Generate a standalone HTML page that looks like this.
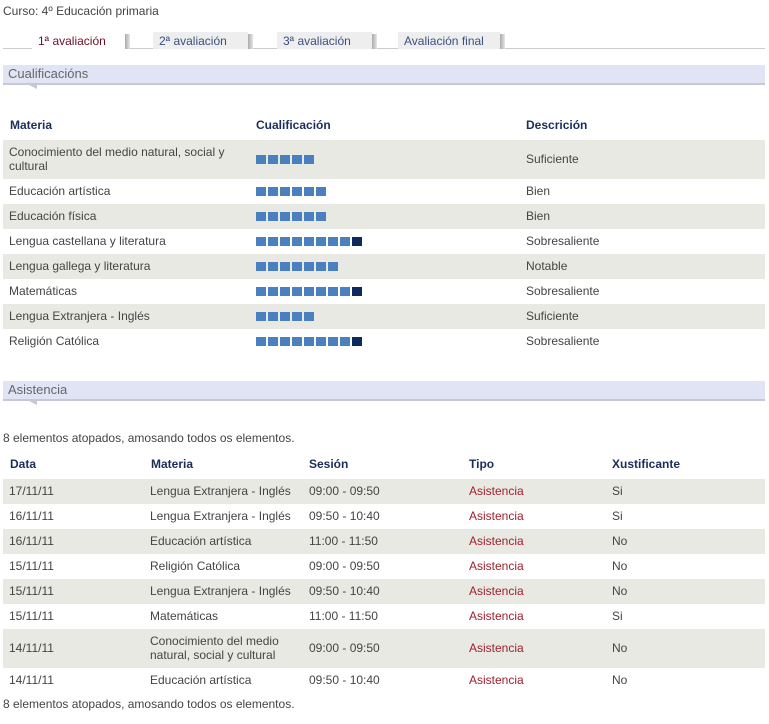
<!DOCTYPE html>
<html><head><meta charset="utf-8"><style>
body{margin:0;width:769px;height:724px;background:#fff;font-family:Tahoma,"Liberation Sans",sans-serif;font-size:12px;color:#444;position:relative;overflow:hidden}
.a{position:absolute;white-space:nowrap}
.tab{position:absolute;top:32px;height:17px;background:#eeeeee;color:#3a5080;padding-left:6px;line-height:18px;box-sizing:border-box}
.tab:after{content:"";position:absolute;right:-5px;top:2px;width:5px;height:15px;background:linear-gradient(90deg,#aaa,#e6e6e6)}
.bar{position:absolute;left:3px;width:762px;height:20px;background:#e1e4f4;border-bottom:2px solid #c6c8d2;box-sizing:border-box;color:#666;font-size:13px;line-height:18px;padding-left:5px}
.bar:after{content:"";position:absolute;left:22px;top:18px;border-left:12px solid transparent;border-top:6px solid #c6c8d2}
.row{position:absolute;left:3px;width:762px}
.s{background:#e9e9e3}
.h{position:absolute;font-weight:bold;color:#1a2e5a}
.sq{position:absolute;height:9px}
.sq i{display:inline-block;width:10px;height:9px;background:#4a80c0;margin-right:2px;vertical-align:top}
.sq i.d{background:#0c2a5c}
.r{color:#a02030}
</style></head><body>
<div class="a" style="left:3px;top:4px">Curso: 4º Educación primaria</div>
<div class="a" style="left:3px;top:48px;width:762px;height:1px;background:#ccc"></div>
<div class="tab" style="left:32px;width:93px;background:#fff;color:#6a1028">1ª avaliación</div>
<div class="tab" style="left:153px;width:95px">2ª avaliación</div>
<div class="tab" style="left:277px;width:95px">3ª avaliación</div>
<div class="tab" style="left:398px;width:102px">Avaliación final</div>
<div class="bar" style="top:65px">Cualificacións</div>

<div class="h" style="left:10px;top:118px">Materia</div>
<div class="h" style="left:256px;top:118px">Cualificación</div>
<div class="h" style="left:526px;top:118px">Descrición</div>

<div class="row s" style="top:140px;height:39px"></div>
<div class="row s" style="top:204px;height:25px"></div>
<div class="row s" style="top:254px;height:25px"></div>
<div class="row s" style="top:304px;height:25px"></div>

<div class="a" style="left:9px;top:145px;line-height:14px">Conocimiento del medio natural, social y<br>cultural</div>
<div class="sq" style="left:256px;top:155px"><i></i><i></i><i></i><i></i><i></i></div>
<div class="a" style="left:526px;top:152px">Suficiente</div>

<div class="a" style="left:9px;top:184px">Educación artística</div>
<div class="sq" style="left:256px;top:187px"><i></i><i></i><i></i><i></i><i></i><i></i></div>
<div class="a" style="left:526px;top:184px">Bien</div>

<div class="a" style="left:9px;top:209px">Educación física</div>
<div class="sq" style="left:256px;top:212px"><i></i><i></i><i></i><i></i><i></i><i></i></div>
<div class="a" style="left:526px;top:209px">Bien</div>

<div class="a" style="left:9px;top:234px">Lengua castellana y literatura</div>
<div class="sq" style="left:256px;top:237px"><i></i><i></i><i></i><i></i><i></i><i></i><i></i><i></i><i class="d"></i></div>
<div class="a" style="left:526px;top:234px">Sobresaliente</div>

<div class="a" style="left:9px;top:259px">Lengua gallega y literatura</div>
<div class="sq" style="left:256px;top:262px"><i></i><i></i><i></i><i></i><i></i><i></i><i></i></div>
<div class="a" style="left:526px;top:259px">Notable</div>

<div class="a" style="left:9px;top:284px">Matemáticas</div>
<div class="sq" style="left:256px;top:287px"><i></i><i></i><i></i><i></i><i></i><i></i><i></i><i></i><i class="d"></i></div>
<div class="a" style="left:526px;top:284px">Sobresaliente</div>

<div class="a" style="left:9px;top:309px">Lengua Extranjera - Inglés</div>
<div class="sq" style="left:256px;top:312px"><i></i><i></i><i></i><i></i><i></i></div>
<div class="a" style="left:526px;top:309px">Suficiente</div>

<div class="a" style="left:9px;top:334px">Religión Católica</div>
<div class="sq" style="left:256px;top:337px"><i></i><i></i><i></i><i></i><i></i><i></i><i></i><i></i><i class="d"></i></div>
<div class="a" style="left:526px;top:334px">Sobresaliente</div>

<div class="bar" style="top:381px">Asistencia</div>
<div class="a" style="left:3px;top:431px">8 elementos atopados, amosando todos os elementos.</div>

<div class="h" style="left:10px;top:457px">Data</div>
<div class="h" style="left:151px;top:457px">Materia</div>
<div class="h" style="left:309px;top:457px">Sesión</div>
<div class="h" style="left:469px;top:457px">Tipo</div>
<div class="h" style="left:612px;top:457px">Xustificante</div>

<div class="row s" style="top:479px;height:25px"></div>
<div class="row s" style="top:529px;height:25px"></div>
<div class="row s" style="top:579px;height:25px"></div>
<div class="row s" style="top:629px;height:39px"></div>

<div class="a" style="left:9px;top:484px">17/11/11</div><div class="a" style="left:150px;top:484px">Lengua Extranjera - Inglés</div><div class="a" style="left:309px;top:484px">09:00 - 09:50</div><div class="a r" style="left:469px;top:484px">Asistencia</div><div class="a" style="left:612px;top:484px">Si</div>
<div class="a" style="left:9px;top:509px">16/11/11</div><div class="a" style="left:150px;top:509px">Lengua Extranjera - Inglés</div><div class="a" style="left:309px;top:509px">09:50 - 10:40</div><div class="a r" style="left:469px;top:509px">Asistencia</div><div class="a" style="left:612px;top:509px">Si</div>
<div class="a" style="left:9px;top:534px">16/11/11</div><div class="a" style="left:150px;top:534px">Educación artística</div><div class="a" style="left:309px;top:534px">11:00 - 11:50</div><div class="a r" style="left:469px;top:534px">Asistencia</div><div class="a" style="left:612px;top:534px">No</div>
<div class="a" style="left:9px;top:559px">15/11/11</div><div class="a" style="left:150px;top:559px">Religión Católica</div><div class="a" style="left:309px;top:559px">09:00 - 09:50</div><div class="a r" style="left:469px;top:559px">Asistencia</div><div class="a" style="left:612px;top:559px">No</div>
<div class="a" style="left:9px;top:584px">15/11/11</div><div class="a" style="left:150px;top:584px">Lengua Extranjera - Inglés</div><div class="a" style="left:309px;top:584px">09:50 - 10:40</div><div class="a r" style="left:469px;top:584px">Asistencia</div><div class="a" style="left:612px;top:584px">No</div>
<div class="a" style="left:9px;top:609px">15/11/11</div><div class="a" style="left:150px;top:609px">Matemáticas</div><div class="a" style="left:309px;top:609px">11:00 - 11:50</div><div class="a r" style="left:469px;top:609px">Asistencia</div><div class="a" style="left:612px;top:609px">Si</div>
<div class="a" style="left:9px;top:641px">14/11/11</div><div class="a" style="left:150px;top:634px;line-height:14px">Conocimiento del medio<br>natural, social y cultural</div><div class="a" style="left:309px;top:641px">09:00 - 09:50</div><div class="a r" style="left:469px;top:641px">Asistencia</div><div class="a" style="left:612px;top:641px">No</div>
<div class="a" style="left:9px;top:673px">14/11/11</div><div class="a" style="left:150px;top:673px">Educación artística</div><div class="a" style="left:309px;top:673px">09:50 - 10:40</div><div class="a r" style="left:469px;top:673px">Asistencia</div><div class="a" style="left:612px;top:673px">No</div>

<div class="a" style="left:3px;top:697px">8 elementos atopados, amosando todos os elementos.</div>
</body></html>
